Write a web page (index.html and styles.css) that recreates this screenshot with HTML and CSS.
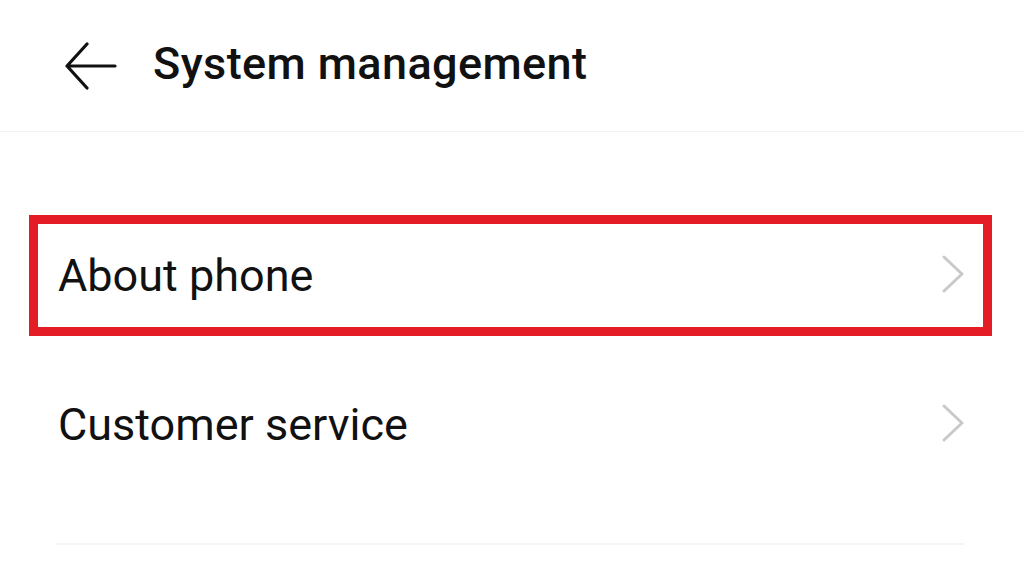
FILE: index.html
```html
<!DOCTYPE html>
<html lang="en">
<head>
  <meta charset="UTF-8">
  <title>System management</title>
  <link rel="stylesheet" href="styles.css">
</head>
<body>
  <div class="topBar">
    <svg class="back" width="52" height="48" viewBox="0 0 52 48">
      <path d="M22 2 L2 24 L22 46 M2 24 H50" fill="none" stroke="#111" stroke-width="3.2" stroke-linecap="round" stroke-linejoin="round"/>
    </svg>
    <h1>System management</h1>
  </div>
  <ul class="menu">
    <li class="active">
      <span>About phone</span>
      <svg class="more" width="22" height="40" viewBox="0 0 22 40">
        <path d="M2 2 L20 19 L2 36" fill="none" stroke="#c9c9c9" stroke-width="3" stroke-linecap="round" stroke-linejoin="round"/>
      </svg>
    </li>
    <li>
      <span>Customer service</span>
      <svg class="more" width="22" height="40" viewBox="0 0 22 40">
        <path d="M2 2 L20 19 L2 36" fill="none" stroke="#c9c9c9" stroke-width="3" stroke-linecap="round" stroke-linejoin="round"/>
      </svg>
    </li>
  </ul>
  <div class="line"></div>
</body>
</html>
```

FILE: styles.css
```css
*{
  margin: 0;
  padding: 0;
}
body{
  background: #fff;
  font-family: Roboto, "Liberation Sans", sans-serif;
  color: #111;
}
ul{
  list-style: none;
}

/* top bar */
.topBar{
  height: 131px;
  border-bottom: 1px solid #f3f3f3;
  display: flex;
  align-items: center;
  padding-left: 65px;
}
.topBar h1{
  font-size: 45px;
  font-weight: 500;
  letter-spacing: 0.4px;
  margin-left: 36px;
  margin-bottom: 5px;
}

/* menu */
.menu{
  margin: 83px 32px 0 29px;
  display: flex;
  flex-direction: column;
  gap: 28px;
}
.menu li{
  height: 103px;
  border: 9px solid transparent;
  display: flex;
  align-items: center;
  justify-content: space-between;
  padding: 0 19px 0 20px;
  font-size: 45px;
}
.menu li.active{
  border-color: #e31c25;
}
.more{
  margin-top: -2px;
}

.line{
  height: 2px;
  background: #f4f4f4;
  margin: 58px 60px 0 56px;
}
```
